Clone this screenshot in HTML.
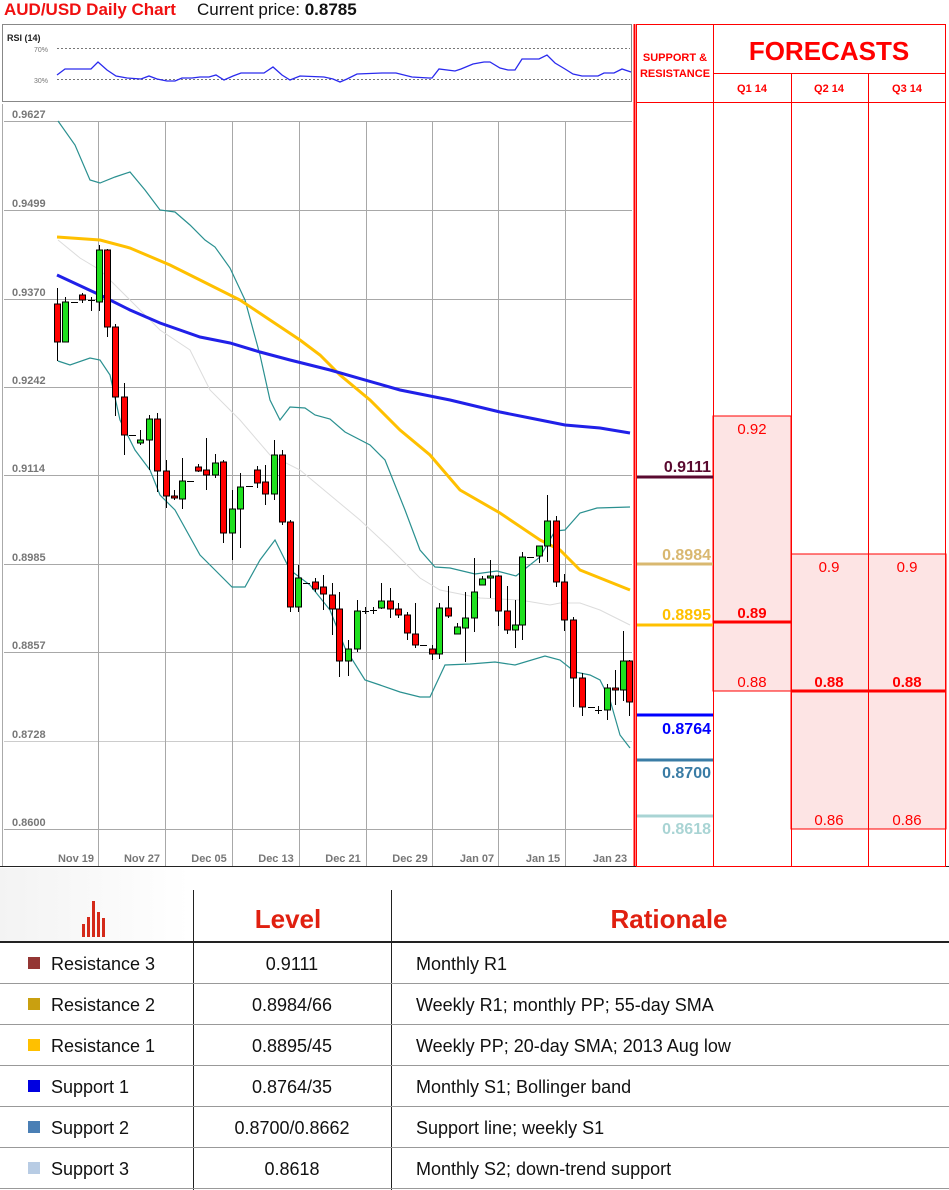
<!DOCTYPE html>
<html><head><meta charset="utf-8">
<style>
body{margin:0;width:949px;height:1190px;background:#fff;font-family:"Liberation Sans",sans-serif;position:relative;overflow:hidden}
.t{position:absolute;white-space:nowrap}
</style></head><body>
<div class="t" style="left:4px;top:0px;font-size:17px;font-weight:bold;color:#f01010;font-family:'Liberation Sans Narrow','Liberation Sans',sans-serif">AUD/USD Daily Chart</div>
<div class="t" style="left:197px;top:0px;font-size:17px;color:#111">Current price: <b>0.8785</b></div>

<svg width="949" height="870" style="position:absolute;left:0;top:0" id="ch">
<!-- RSI box -->
<rect x="2.5" y="24.5" width="629" height="77" fill="#fff" stroke="#888"/>
<text x="7" y="41" font-size="9" font-weight="bold" fill="#222" font-family="Liberation Sans">RSI (14)</text>
<text x="34" y="52" font-size="7" fill="#777" font-family="Liberation Sans">70%</text>
<text x="34" y="83" font-size="7" fill="#777" font-family="Liberation Sans">30%</text>
<line x1="57" y1="48.5" x2="630" y2="48.5" stroke="#777" stroke-dasharray="2,2"/>
<line x1="57" y1="79.5" x2="630" y2="79.5" stroke="#777" stroke-dasharray="2,2"/>
<polyline fill="none" stroke="#2a2aee" stroke-width="1.3" points="57,75 65,69 91,69 98,62 107,70 116,76 127,78 141,79 149,76 157,79 167,81 175,81 182,78 192,78 200,77 209,77 216,75 224,80 233,76 241,73 253,73 264,73 273,67 282,75 290,80 300,76 324,77 333,79 340,82 347,79 357,74 382,73 396,73 412,77 429,78 432,78 439,69 455,71 461,69 473,64 484,62 490,62 500,68 508,70 515,70 522,59 539,59 547,55 555,63 565,69 573,74 582,76 598,76 604,73 614,73 622,69 631,72"/>
<!-- main chart box -->
<line x1="2.5" y1="104" x2="2.5" y2="866" stroke="#aaa"/>
<g id="grid" stroke="#a8a8a8" stroke-width="1"></g>
<g id="ylab" font-size="11" font-weight="bold" fill="#777" font-family="Liberation Sans"></g>
<g id="xlab" font-size="11" font-weight="bold" fill="#777" font-family="Liberation Sans" text-anchor="middle"></g>
<polyline fill="none" stroke="#dcdcdc" stroke-width="1" points="58,240 80,258 100,270 130,300 160,330 190,350 210,390 240,420 270,455 300,470 330,495 360,520 390,548 420,578 440,590 480,598 520,600 550,605 560,603 580,603 600,610 630,625"/>
<polyline fill="none" stroke="#2a9090" stroke-width="1.2" points="58,121 75,145 90,180 100,183 115,177 130,172 145,190 160,210 175,212 190,225 205,240 215,247 230,268 245,300 260,355 270,400 280,420 290,407 305,408 315,415 330,419 345,432 370,445 385,460 405,510 420,550 435,567 450,568 475,574 497,571 516,576 540,557 555,531 565,530 580,513 597,508 630,507"/>
<polyline fill="none" stroke="#2a9090" stroke-width="1.2" points="58,361 70,365 90,358 100,360 110,375 120,420 135,450 150,470 160,495 175,510 200,555 215,570 232,587 245,587 260,560 275,540 290,570 310,585 330,610 345,648 365,680 380,685 400,692 420,697 430,697 445,665 470,664 495,662 515,665 545,656 560,660 575,672 590,675 600,680 610,700 620,735 630,748"/>
<polyline fill="none" stroke="#ffc000" stroke-width="3" points="57,237 100,240 130,248 170,265 200,280 240,300 270,320 300,340 320,355 340,375 370,400 400,430 430,455 460,490 500,513 540,540 560,550 580,570 600,578 630,590"/>
<polyline fill="none" stroke="#2020e8" stroke-width="3" points="57,275 100,295 130,310 160,323 200,337 230,343 260,352 290,360 330,370 400,390 450,400 500,412 530,418 565,425 600,428 630,433"/>
<g id="cdl"></g>
<line x1="0" y1="866.5" x2="949" y2="866.5" stroke="#222"/>
<!-- forecasts -->
<rect x="713" y="416" width="78" height="275" fill="#fde4e4" stroke="#f00"/>
<rect x="791" y="554" width="155" height="275" fill="#fde4e4" stroke="#f00"/>
<line x1="634.5" y1="24" x2="634.5" y2="866" stroke="#f00" stroke-width="2"/>
<rect x="636.5" y="24.5" width="309" height="842" fill="none" stroke="#f00"/>
<line x1="713.5" y1="24" x2="713.5" y2="866" stroke="#f00"/>
<line x1="791.5" y1="73" x2="791.5" y2="866" stroke="#f00"/>
<line x1="868.5" y1="73" x2="868.5" y2="866" stroke="#f00"/>
<line x1="713" y1="73.5" x2="946" y2="73.5" stroke="#f00"/>
<line x1="636" y1="102.5" x2="946" y2="102.5" stroke="#f00"/>
<line x1="713" y1="622" x2="791" y2="622" stroke="#f00" stroke-width="3"/>
<line x1="791" y1="691" x2="946" y2="691" stroke="#f00" stroke-width="3"/>
<g font-family="Liberation Sans" font-weight="bold" fill="#f00" text-anchor="middle">
<text x="675" y="61" font-size="11">SUPPORT &amp;</text>
<text x="675" y="77" font-size="11">RESISTANCE</text>
<text x="829" y="60" font-size="26">FORECASTS</text>
<text x="752" y="92" font-size="11">Q1 14</text>
<text x="829" y="92" font-size="11">Q2 14</text>
<text x="907" y="92" font-size="11">Q3 14</text>
</g>
<g font-family="Liberation Sans" font-size="15" fill="#f00" text-anchor="middle">
<text x="752" y="434">0.92</text>
<text x="752" y="618" font-weight="bold">0.89</text>
<text x="752" y="687">0.88</text>
<text x="829" y="572">0.9</text><text x="907" y="572">0.9</text>
<text x="829" y="687" font-weight="bold">0.88</text><text x="907" y="687" font-weight="bold">0.88</text>
<text x="829" y="825">0.86</text><text x="907" y="825">0.86</text>
</g>
<g stroke-width="3">
<line x1="637" y1="477" x2="713" y2="477" stroke="#5a0a30"/>
<line x1="637" y1="564" x2="713" y2="564" stroke="#d9b870"/>
<line x1="637" y1="625" x2="713" y2="625" stroke="#ffc000"/>
<line x1="637" y1="715" x2="713" y2="715" stroke="#0000ff"/>
<line x1="637" y1="760" x2="713" y2="760" stroke="#3a7ca5"/>
<line x1="637" y1="816" x2="713" y2="816" stroke="#a9d4d4"/>
</g>
<g font-family="Liberation Sans" font-size="16" font-weight="bold" text-anchor="end">
<text x="711" y="472" fill="#5a0a30">0.9111</text>
<text x="711" y="560" fill="#d9b870">0.8984</text>
<text x="711" y="620" fill="#ffc000">0.8895</text>
<text x="711" y="734" fill="#0000ff">0.8764</text>
<text x="711" y="778" fill="#3a7ca5">0.8700</text>
<text x="711" y="834" fill="#a9d4d4">0.8618</text>
</g>
</svg>

<!-- table -->
<div style="position:absolute;left:0;top:868px;width:190px;height:74px;background:linear-gradient(90deg,#f3f3f3,#fff)"></div>
<svg width="949" height="322" style="position:absolute;left:0;top:868px">
<g fill="#d42a1a"><rect x="82" y="56" width="3" height="13"/><rect x="87" y="49" width="3" height="20"/><rect x="92" y="33" width="3" height="36"/><rect x="97" y="44" width="3" height="25"/><rect x="102" y="50" width="3" height="19"/></g>
<line x1="193.5" y1="22" x2="193.5" y2="322" stroke="#222"/>
<line x1="391.5" y1="22" x2="391.5" y2="322" stroke="#222"/>
<line x1="0" y1="74" x2="949" y2="74" stroke="#222" stroke-width="2"/>
<g stroke="#999"><line x1="0" y1="115.5" x2="949" y2="115.5"/><line x1="0" y1="156.5" x2="949" y2="156.5"/><line x1="0" y1="197.5" x2="949" y2="197.5"/><line x1="0" y1="238.5" x2="949" y2="238.5"/><line x1="0" y1="279.5" x2="949" y2="279.5"/><line x1="0" y1="320.5" x2="949" y2="320.5"/></g>
<g font-family="Liberation Sans" font-weight="bold" fill="#e02010" font-size="26" text-anchor="middle"><text x="288" y="60">Level</text><text x="669" y="60">Rationale</text></g>
<g><rect x="28" y="89" width="12" height="12" fill="#943634"/><rect x="28" y="130" width="12" height="12" fill="#c9a010"/><rect x="28" y="171" width="12" height="12" fill="#ffc000"/><rect x="28" y="212" width="12" height="12" fill="#0000e0"/><rect x="28" y="253" width="12" height="12" fill="#4a7fb5"/><rect x="28" y="294" width="12" height="12" fill="#b8cce4"/></g>
<g font-family="Liberation Sans" font-size="18" fill="#111">
<text x="51" y="102">Resistance 3</text><text x="51" y="143">Resistance 2</text><text x="51" y="184">Resistance 1</text><text x="51" y="225">Support 1</text><text x="51" y="266">Support 2</text><text x="51" y="307">Support 3</text>
<g text-anchor="middle"><text x="292" y="102">0.9111</text><text x="292" y="143">0.8984/66</text><text x="292" y="184">0.8895/45</text><text x="292" y="225">0.8764/35</text><text x="292" y="266">0.8700/0.8662</text><text x="292" y="307">0.8618</text></g>
<text x="416" y="102">Monthly R1</text><text x="416" y="143">Weekly R1; monthly PP; 55-day SMA</text><text x="416" y="184">Weekly PP; 20-day SMA; 2013 Aug low</text><text x="416" y="225">Monthly S1; Bollinger band</text><text x="416" y="266">Support line; weekly S1</text><text x="416" y="307">Monthly S2; down-trend support</text>
</g>
</svg>

<script>
var NS="http://www.w3.org/2000/svg";
function el(p,t,a,txt){var e=document.createElementNS(NS,t);for(var k in a)e.setAttribute(k,a[k]);if(txt)e.textContent=txt;p.appendChild(e);return e;}
var g=document.getElementById('grid'),yl=document.getElementById('ylab'),xl=document.getElementById('xlab');
var ys=[121,210,299,387,475,564,652,741,829],lab=["0.9627","0.9499","0.9370","0.9242","0.9114","0.8985","0.8857","0.8728","0.8600"];
for(var i=0;i<ys.length;i++){el(g,'line',{x1:4,y1:ys[i]+.5,x2:632,y2:ys[i]+.5,stroke:i==7?'#ccc':'#a8a8a8'});el(yl,'text',{x:12,y:ys[i]-3},lab[i]);}
var xs=[98,165,232,299,366,432,498,565],dl=["Nov 19","Nov 27","Dec 05","Dec 13","Dec 21","Dec 29","Jan 07","Jan 15","Jan 23"];
for(var i=0;i<xs.length;i++)el(g,'line',{x1:xs[i]+.5,y1:121,x2:xs[i]+.5,y2:866});
var dx=[76,142,209,276,343,410,477,543,610];
for(var i=0;i<9;i++)el(xl,'text',{x:dx[i],y:862},dl[i]);
var C=[[57,304,342,288,361,'r'],[65,302,342,297,342,'g'],[74,302,302,302,302,'d'],[82,295,300,293,303,'r'],[91,300,301,297,311,'d'],[99,250,302,245,311,'g'],[107,250,327,249,337,'r'],[115,327,397,324,416,'r'],[124,397,435,383,455,'r'],[132,435,436,435,436,'d'],[140,440,443,430,445,'g'],[149,419,440,415,470,'g'],[157,419,471,413,492,'r'],[166,471,496,460,508,'r'],[174,496,498,490,500,'r'],[182,481,499,458,509,'g'],[190,481,482,481,482,'d'],[198,467,471,464,472,'r'],[206,470,475,438,490,'r'],[215,463,475,454,478,'g'],[223,462,533,460,543,'r'],[232,509,533,490,560,'g'],[240,487,509,473,548,'g'],[249,486,487,486,487,'d'],[257,470,483,466,488,'r'],[265,482,494,465,505,'r'],[274,455,494,440,500,'g'],[282,455,522,450,525,'r'],[290,522,607,520,612,'r'],[298,578,607,565,612,'g'],[306,583,584,583,584,'d'],[315,582,589,578,592,'r'],[323,587,594,575,610,'r'],[332,595,609,583,635,'r'],[339,609,661,592,677,'r'],[348,649,661,640,676,'g'],[357,611,649,600,652,'g'],[365,611,612,607,614,'d'],[373,610,612,607,614,'d'],[381,601,608,583,609,'g'],[390,601,609,588,618,'r'],[398,609,615,603,618,'r'],[407,615,633,612,640,'r'],[415,634,645,603,648,'r'],[423,645,646,645,646,'d'],[432,649,654,645,660,'r'],[439,608,654,603,659,'g'],[448,608,616,586,618,'r'],[457,627,634,623,634,'g'],[465,618,628,592,662,'g'],[474,592,618,558,632,'g'],[482,579,585,576,585,'g'],[490,576,578,560,598,'g'],[498,576,611,575,626,'r'],[507,611,630,586,634,'r'],[515,625,630,600,648,'g'],[522,557,625,552,640,'g'],[530,557,558,557,558,'d'],[539,546,556,551,563,'g'],[547,521,546,495,562,'g'],[556,521,582,516,587,'r'],[564,582,620,574,631,'r'],[573,620,678,617,707,'r'],[582,678,707,673,716,'r'],[591,707,708,707,708,'d'],[598,710,711,706,714,'d'],[607,688,710,684,720,'g'],[615,688,690,670,705,'r'],[623,661,690,631,701,'g'],[629,661,702,660,716,'r']];
var cg=document.getElementById('cdl');
C.forEach(function(c){
 el(cg,'line',{x1:c[0]+.5,y1:c[3],x2:c[0]+.5,y2:c[4],stroke:'#000'});
 if(c[5]=='d'){el(cg,'line',{x1:c[0]-3,y1:c[1]+.5,x2:c[0]+4,y2:c[1]+.5,stroke:'#000'});}
 else el(cg,'rect',{x:c[0]-2.5,y:c[1],width:6,height:Math.max(2,c[2]-c[1]),fill:c[5]=='r'?'#f00':'#1ee01e',stroke:'#000','stroke-width':1});
});
</script>
</body></html>
